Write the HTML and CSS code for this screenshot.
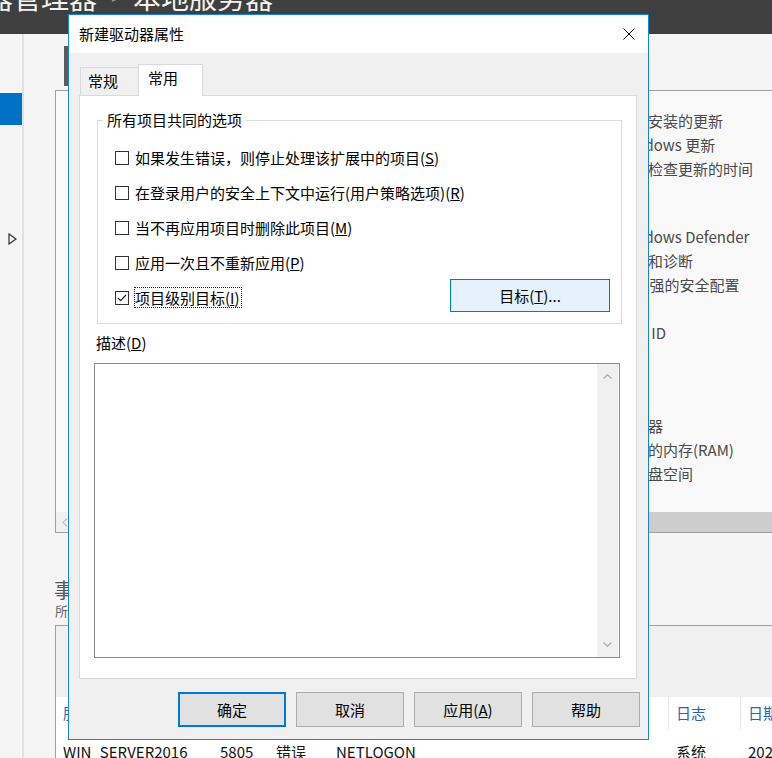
FILE: index.html
```html
<!DOCTYPE html>
<html lang="zh-CN">
<head>
  <meta charset="UTF-8">
  <link rel="stylesheet" href="styles.css">
</head>
<body>

<div class="topbar">
  <span class="crumb first">服务器管理器</span>
  <span class="crumb-sep">▸</span>
  <span class="crumb">本地服务器</span>
</div>

<div class="main">
  <div class="nav">
    <div class="nav-item selected"></div>
    <div class="nav-arrow">
      <svg width="9" height="12" viewBox="0 0 9 12"><path d="M1 1L8 6L1 11Z" fill="none" stroke="#333" stroke-width="1.2"/></svg>
    </div>
  </div>

  <div class="content">
    <div class="section-mark"></div>

    <div class="props-box">
      <div class="props">
        <div class="prop-group">
          <div>上次安装的更新</div>
          <div>Windows 更新</div>
          <div>上次检查更新的时间</div>
        </div>
        <div class="prop-group g2">
          <div>Windows Defender</div>
          <div>反馈和诊断</div>
          <div>IE 增强的安全配置</div>
          <div>时区</div>
          <div>产品 ID</div>
        </div>
        <div class="prop-group g3">
          <div>处理器</div>
          <div>安装的内存(RAM)</div>
          <div>总磁盘空间</div>
        </div>
      </div>
      <div class="hscroll">
        <svg class="hscroll-left" width="6" height="9" viewBox="0 0 6 9"><path d="M5 0.5L1 4.5L5 8.5" fill="none" stroke="#9a9a9a"/></svg>
        <div class="hscroll-thumb"></div>
      </div>
    </div>

    <div class="events-title">事件</div>
    <div class="events-sub">所有事件 | 共 1 个</div>

    <div class="events-box">
      <div class="filter"></div>
      <div class="ev-row ev-head">
        <span class="c1">服务器名称</span>
        <span class="c2">ID</span>
        <span class="c3">严重性</span>
        <span class="c4">源</span>
        <span class="c5">日志</span>
        <span class="c6">日期和时间</span>
      </div>
      <div class="ev-row ev-data">
        <span class="c1">WIN_SERVER2016</span>
        <span class="c2">5805</span>
        <span class="c3">错误</span>
        <span class="c4">NETLOGON</span>
        <span class="c5">系统</span>
        <span class="c6">2024/5/12 9:41:07</span>
      </div>
    </div>
  </div>
</div>

<!-- property dialog over the server manager window -->
<div class="dialog">
  <div class="dlg-title">
    <span>新建驱动器属性</span>
    <svg width="12" height="12" viewBox="0 0 12 12"><path d="M0.5 0.5L11.5 11.5M11.5 0.5L0.5 11.5" stroke="#000" stroke-width="1"/></svg>
  </div>

  <div class="dlg-body">
    <div class="tabs">
      <div class="tab">常规</div>
      <div class="tab active">常用</div>
    </div>

    <div class="panel">
      <fieldset class="group">
        <legend>所有项目共同的选项</legend>
        <div class="rows">
          <div class="row">
            <span class="cb"></span>
            <span class="cb-label">如果发生错误，则停止处理该扩展中的项目(<u>S</u>)</span>
          </div>
          <div class="row">
            <span class="cb"></span>
            <span class="cb-label">在登录用户的安全上下文中运行(用户策略选项)(<u>R</u>)</span>
          </div>
          <div class="row">
            <span class="cb"></span>
            <span class="cb-label">当不再应用项目时删除此项目(<u>M</u>)</span>
          </div>
          <div class="row">
            <span class="cb"></span>
            <span class="cb-label">应用一次且不重新应用(<u>P</u>)</span>
          </div>
          <div class="row">
            <span class="cb checked">
              <svg width="12" height="12" viewBox="0 0 12 12"><path d="M2 6L4.6 8.6L10 3" fill="none" stroke="#222" stroke-width="1.2"/></svg>
            </span>
            <span class="cb-label focus">项目级别目标(<u>I</u>)</span>
            <button class="btn-target">目标(<u>T</u>)...</button>
          </div>
        </div>
      </fieldset>

      <div class="desc-label">描述(<u>D</u>)</div>
      <div class="desc-box">
        <div class="vscroll">
          <svg width="9" height="5" viewBox="0 0 9 5"><path d="M0.5 4.5L4.5 0.8L8.5 4.5" fill="none" stroke="#a8a8a8" stroke-width="1.2"/></svg>
          <svg width="9" height="5" viewBox="0 0 9 5"><path d="M0.5 0.5L4.5 4.2L8.5 0.5" fill="none" stroke="#a8a8a8" stroke-width="1.2"/></svg>
        </div>
      </div>
    </div>

    <div class="dlg-buttons">
      <button class="btn default">确定</button>
      <button class="btn">取消</button>
      <button class="btn">应用(<u>A</u>)</button>
      <button class="btn">帮助</button>
    </div>
  </div>
</div>

</body>
</html>
```

FILE: styles.css
```css
* {
  box-sizing: border-box;
}

body {
  margin: 0;
  width: 772px;
  height: 758px;
  overflow: hidden;
  position: relative;
  background: #f5f5f5;
  font-family: "Noto Sans CJK SC", "Noto Sans", sans-serif;
  font-size: 15px;
  color: #000;
}

/* server manager window behind the dialog */

.topbar {
  height: 34px;
  background: #3f3f3f;
  display: flex;
  align-items: flex-start;
  overflow: hidden;
  white-space: nowrap;
  color: #f2f2f2;
  font-size: 28px;
  line-height: 28px;
}

.crumb {
  margin-top: -17px;
}

.crumb.first {
  margin-left: -71px;
}

.crumb-sep {
  width: 36px;
  text-align: center;
  font-size: 12px;
  line-height: 12px;
  margin-top: -9px;
  color: #9a9a9a;
}

.main {
  display: flex;
  height: 724px;
}

.nav {
  width: 24px;
  border-right: 2px solid #e1e1e1;
  background: #f5f5f5;
  padding-top: 59px;
}

.nav-item {
  height: 32px;
}

.nav-item.selected {
  background: #0072c6;
}

.nav-arrow {
  margin: 108px 0 0 8px;
  line-height: 0;
}

.content {
  flex: 1;
  min-width: 0;
  padding-left: 31px;
}

.section-mark {
  width: 13px;
  height: 40px;
  margin: 12px 0 0 9px;
  background: #5a5a5a;
}

.props-box {
  margin-top: 4px;
  height: 443px;
  border: 1px solid #a0a0a0;
  border-right: none;
  background: #f9f9f9;
  display: flex;
  flex-direction: column;
}

.props {
  flex: 1;
  padding: 18px 0 0 562px;
  color: #4a4a4a;
  line-height: 24px;
  white-space: nowrap;
}

.g2 {
  margin-top: 44px;
}

.g3 {
  margin-top: 69px;
}

.hscroll {
  height: 20px;
  background: #f0f0f0;
  display: flex;
  align-items: center;
}

.hscroll-left {
  margin-left: 6px;
}

.hscroll-thumb {
  flex: 1;
  align-self: stretch;
  margin-left: 24px;
  background: #cdcdcd;
}

.events-title {
  margin: 45px 0 0 -1px;
  font-size: 20px;
  line-height: 24px;
  color: #555;
}

.events-sub {
  margin-top: 1px;
  font-size: 13px;
  line-height: 16px;
  color: #666;
}

.events-box {
  margin-top: 6px;
  border-top: 1px solid #a0a0a0;
  border-left: 1px solid #a0a0a0;
  background: #fff;
}

.filter {
  height: 71px;
  background: #f0f0f0;
}

.ev-row {
  display: flex;
  white-space: nowrap;
}

.ev-row span {
  flex: none;
  padding-left: 7px;
  border-left: 1px solid transparent;
}

.ev-row .c1 { width: 156px; border-left: none; }
.ev-row .c2 { width: 56px; }
.ev-row .c3 { width: 60px; }
.ev-row .c4 { width: 340px; }
.ev-row .c5 { width: 72px; }
.ev-row .c6 { width: 200px; }

.ev-head {
  height: 33px;
  line-height: 32px;
  color: #2c62b0;
}

.ev-head span {
  border-left-color: #e6e6e6;
}

.ev-data {
  padding-top: 12px;
  line-height: 20px;
  color: #111;
}

/* dialog */

.dialog {
  position: absolute;
  left: 68px;
  top: 14px;
  width: 581px;
  height: 726px;
  border: 1px solid #1883d7;
  background: #f0f0f0;
  display: flex;
  flex-direction: column;
}

.dlg-title {
  height: 38px;
  flex: none;
  background: #fff;
  display: flex;
  align-items: center;
  justify-content: space-between;
  padding: 0 13px 0 10px;
  line-height: 20px;
}

.dlg-body {
  flex: 1;
  display: flex;
  flex-direction: column;
  padding: 11px 11px 12px 10px;
}

.tabs {
  height: 31px;
  flex: none;
  display: flex;
  align-items: flex-end;
  padding-left: 1px;
}

.tab {
  width: 58px;
  height: 28px;
  padding-left: 7px;
  border: 1px solid #d9d9d9;
  border-right: none;
  border-bottom: none;
  background: #f0f0f0;
  line-height: 25px;
}

.tab.active {
  width: 65px;
  height: 32px;
  margin-bottom: -1px;
  padding-left: 9px;
  border-right: 1px solid #d9d9d9;
  background: #fff;
  position: relative;
  z-index: 1;
}

.panel {
  flex: 1;
  border: 1px solid #d9d9d9;
  background: #fff;
}

.group {
  margin: 14px 14px 0 17px;
  padding: 0;
  min-width: 0;
  border: 1px solid #dcdcdc;
}

.group legend {
  margin-left: 5px;
  padding: 0 4px;
  line-height: 20px;
}

.rows {
  padding: 10px 11px 8px 17px;
}

.row {
  height: 35px;
  display: flex;
  align-items: center;
}

.cb {
  flex: none;
  width: 14px;
  height: 14px;
  border: 1px solid #333;
  background: #fff;
  line-height: 0;
}

.cb-label {
  margin-left: 5px;
  padding-right: 1px;
  border: 1px dotted transparent;
  line-height: 19px;
  white-space: nowrap;
}

.cb-label.focus {
  border-color: #222;
}

.btn-target {
  margin: 0 0 4px auto;
  width: 160px;
  height: 33px;
  border: 1px solid #0078d7;
  background: #e5f1fb;
  font-family: inherit;
  font-size: 15px;
  line-height: 31px;
  padding: 0;
  color: #000;
}

.desc-label {
  margin: 9px 0 0 16px;
  line-height: 20px;
}

.desc-box {
  margin: 10px 0 0 14px;
  width: 526px;
  height: 295px;
  border: 1px solid #8a8a8a;
  background: #fff;
  display: flex;
  justify-content: flex-end;
}

.vscroll {
  width: 21px;
  margin-right: 1px;
  background: #f0f0f0;
  display: flex;
  flex-direction: column;
  justify-content: space-between;
  align-items: center;
  padding: 10px 0;
}

.vscroll svg {
  display: block;
}

.dlg-buttons {
  flex: none;
  margin: 13px -3px 0 0;
  display: flex;
  justify-content: flex-end;
  gap: 10px;
}

.btn {
  width: 108px;
  height: 35px;
  padding: 0;
  border: 1px solid #adadad;
  background: #e1e1e1;
  font-family: inherit;
  font-size: 15px;
  line-height: 33px;
  color: #000;
}

.btn.default {
  border: 2px solid #0078d7;
  line-height: 31px;
}
```
